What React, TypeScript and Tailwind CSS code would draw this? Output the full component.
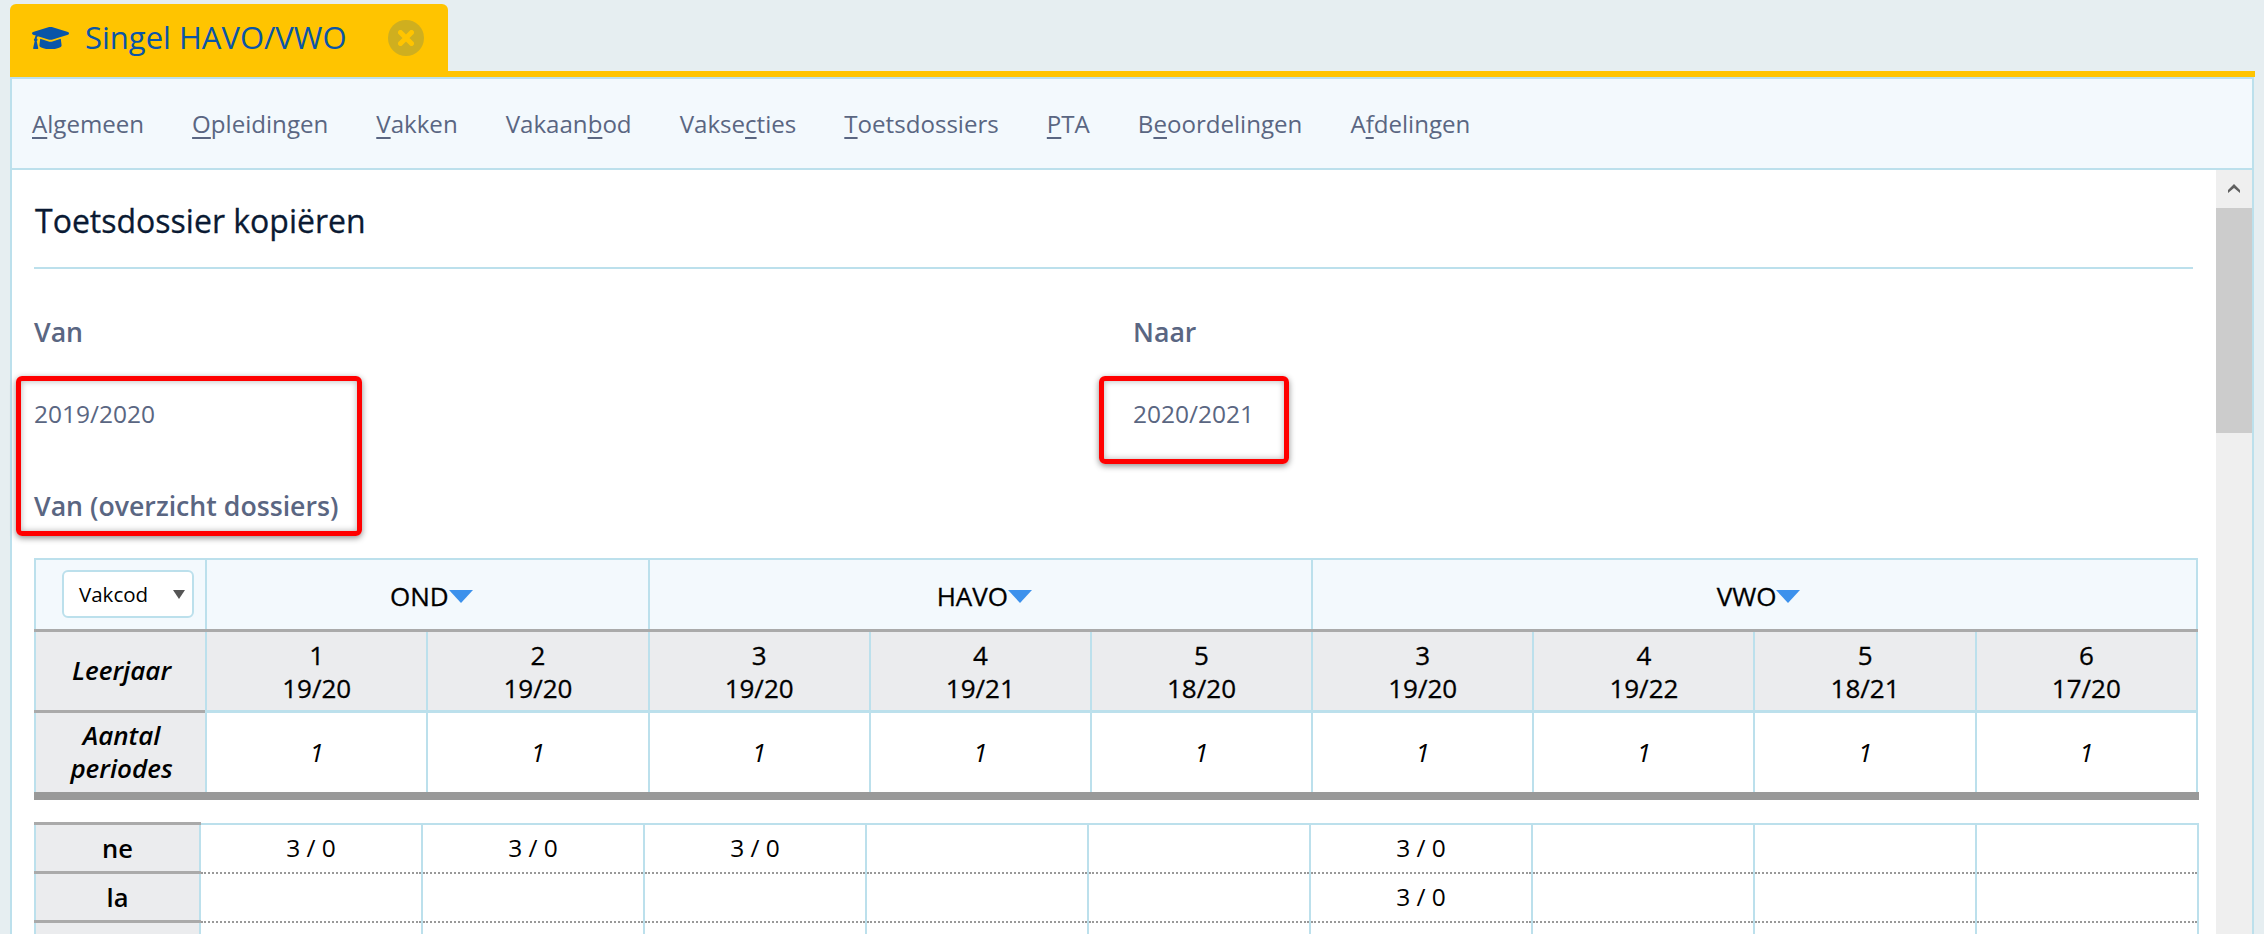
import { FaGraduationCap } from "react-icons/fa";

const NAV = [
  { pre: "", key: "A", post: "lgemeen" },
  { pre: "", key: "O", post: "pleidingen" },
  { pre: "", key: "V", post: "akken" },
  { pre: "Vakaan", key: "b", post: "od" },
  { pre: "Vakse", key: "c", post: "ties" },
  { pre: "", key: "T", post: "oetsdossiers" },
  { pre: "", key: "P", post: "TA" },
  { pre: "B", key: "e", post: "oordelingen" },
  { pre: "A", key: "f", post: "delingen" },
];

const YEARS = [
  ["1", "19/20"],
  ["2", "19/20"],
  ["3", "19/20"],
  ["4", "19/21"],
  ["5", "18/20"],
  ["3", "19/20"],
  ["4", "19/22"],
  ["5", "18/21"],
  ["6", "17/20"],
];

const ROWS = [
  { code: "ne", cells: ["3 / 0", "3 / 0", "3 / 0", "", "", "3 / 0", "", "", ""] },
  { code: "la", cells: ["", "", "", "", "", "3 / 0", "", "", ""] },
  { code: "", cells: ["", "", "", "", "", "", "", "", ""] },
];

function GroupHeader({ label, span }: { label: string; span: number }) {
  return (
    <th
      colSpan={span}
      className="border-2 border-b-0 border-[#bce0ec] bg-[#f3f9fd] pt-[4px] pl-[8px] text-center text-[26px] font-normal text-black [-webkit-text-stroke:0.3px]"
    >
      <span className="inline-flex items-center">
        {label}
        <span className="h-0 w-0 border-x-[12px] border-t-[13px] border-x-transparent border-t-[#3c91ec]" />
      </span>
    </th>
  );
}

export default function App() {
  return (
    <div className="h-[934px] overflow-hidden bg-[#e6eef1] font-['Open_Sans',sans-serif] text-black">
      {/* Tab strip */}
      <div className="flex h-[71px] items-end pl-[10px] pt-1">
        <div className="flex h-[67px] w-[438px] items-center rounded-t-[6px] bg-[#ffc400] pl-[22px]">
          <FaGraduationCap className="h-[36px] w-[37px] text-[#0a55a8]" />
          <span className="ml-[16px] text-[31px] whitespace-nowrap text-[#0a55a8]">Singel HAVO/VWO</span>
          <span className="ml-[41px] flex h-[36px] w-[36px] shrink-0 items-center justify-center rounded-full bg-[#cfaf1f]">
            <svg viewBox="0 0 16 16" className="h-[16px] w-[16px] stroke-[#ffc400]">
              <path d="M2.5 2.5 13.5 13.5M13.5 2.5 2.5 13.5" strokeWidth="5" strokeLinecap="round" />
            </svg>
          </span>
        </div>
      </div>

      <div className="mr-[9px] ml-[10px] h-[6px] bg-[#ffc400]" />

      <div className="mr-[10px] ml-[10px] flex h-[863px] flex-col border-x-2 border-[#bce0ec]">
        {/* Sub navigation */}
        <nav className="flex h-[93px] shrink-0 items-center gap-[48px] border-y-2 border-[#bce0ec] bg-[#f3f9fd] pt-[1px] pl-[20px] text-[24.1px] text-[#5a6682]">
          {NAV.map((item) => (
            <span key={item.pre + item.key + item.post}>
              {item.pre}
              <span className="underline underline-offset-[4px]">{item.key}</span>
              {item.post}
            </span>
          ))}
        </nav>

        <div className="flex min-h-0 flex-1 bg-white">
          <main className="relative min-w-0 flex-1 pl-[22px]">
            <h1 className="ml-[1px] pt-[30px] text-[32px] leading-[41px] text-[#0a1a33] [-webkit-text-stroke:0.3px]">Toetsdossier kopiëren</h1>
            <div className="mt-[26px] mr-[23px] h-[2px] bg-[#bce0ec]" />

            <div className="mt-[45px] grid grid-cols-[1099px_1fr] text-[#5a6682]">
              <div>
                <h2 className="text-[26.7px] leading-[36px] font-semibold">Van</h2>
                <p className="mt-[47px] text-[24.5px] leading-[33px]">2019/2020</p>
                <h2 className="mt-[58px] text-[26.7px] leading-[36px] font-semibold">Van (overzicht dossiers)</h2>
              </div>
              <div>
                <h2 className="text-[26.7px] leading-[36px] font-semibold">Naar</h2>
                <p className="mt-[47px] text-[24.5px] leading-[33px]">2020/2021</p>
              </div>
            </div>

            {/* Annotation boxes */}
            <div className="absolute top-[206px] left-[4px] h-[160px] w-[346px] rounded-[6px] border-[5px] border-[#ff0000] shadow-[0_2px_6px_rgba(0,0,0,0.45),inset_0_0_6px_rgba(0,0,0,0.3)]" />
            <div className="absolute top-[206px] left-[1087px] h-[88px] w-[190px] rounded-[6px] border-[5px] border-[#ff0000] shadow-[0_2px_6px_rgba(0,0,0,0.45),inset_0_0_6px_rgba(0,0,0,0.3)]" />

            <table className="mt-[34px] w-[2164px] table-fixed border-collapse">
              <colgroup>
                <col className="w-[171px]" />
                {YEARS.map((_, i) => (
                  <col key={i} className="w-[221px]" />
                ))}
              </colgroup>
              <thead>
                <tr className="h-[71px]">
                  <th className="border-2 border-b-0 border-[#bce0ec] bg-[#f3f9fd] text-center">
                    <span className="ml-[26px] flex h-[48px] w-[132px] items-center justify-between rounded-[6px] border-2 border-[#bce0ec] bg-white pr-[7px] pl-[15px] text-[20.5px] font-normal">
                      Vakcod
                      <span className="h-0 w-0 border-x-[6px] border-t-[9px] border-x-transparent border-t-[#555]" />
                    </span>
                  </th>
                  <GroupHeader label="OND" span={2} />
                  <GroupHeader label="HAVO" span={3} />
                  <GroupHeader label="VWO" span={4} />
                </tr>
                <tr className="h-[81px] border-t-[3px] border-t-[#aaaaaa]">
                  <th className="border-x-2 border-[#bce0ec] bg-[#ebecee] pl-[2px] text-[26px] font-semibold italic">Leerjaar</th>
                  {YEARS.map(([year, span], i) => (
                    <th key={i} className="border-x-2 border-b-[3px] border-[#bce0ec] bg-[#ebecee] pt-[2px] text-[26px] leading-[33px] font-normal [-webkit-text-stroke:0.3px]">
                      {year}
                      <br />
                      {span}
                    </th>
                  ))}
                </tr>
                <tr className="h-[81px] border-t-[3px] border-t-[#aaaaaa]">
                  <th className="border-x-2 border-[#bce0ec] bg-[#ebecee] pl-[2px] text-[26px] leading-[33px] font-semibold italic">
                    Aantal
                    <br />
                    periodes
                  </th>
                  {YEARS.map((_, i) => (
                    <td key={i} className="border-x-2 border-[#bce0ec] pt-[1px] text-center text-[26px] italic">
                      1
                    </td>
                  ))}
                </tr>
              </thead>
            </table>
            <div className="h-[8px] w-[2165px] bg-[#999999]" />

            <table className="mt-[22px] w-[2164px] table-fixed border-collapse">
              <colgroup>
                <col className="w-[165px]" />
                {YEARS.map((_, i) => (
                  <col key={i} className="w-[222px]" />
                ))}
              </colgroup>
              <tbody>
                {ROWS.map((row, r) => (
                  <tr key={r} className="h-[49px]">
                    <th className="border-x-2 border-t-[3px] border-x-[#bce0ec] border-t-[#aaaaaa] bg-[#ebecee] text-[25.5px] font-semibold">
                      {row.code}
                    </th>
                    {row.cells.map((cell, i) => (
                      <td
                        key={i}
                        className={`border-x-2 border-t-2 border-x-[#bce0ec] text-center text-[24.5px] ${r === 0 ? "border-t-[#bce0ec]" : "border-t-[#999999] [border-top-style:dotted]"}`}
                      >
                        {cell}
                      </td>
                    ))}
                  </tr>
                ))}
              </tbody>
            </table>
          </main>

          {/* Scrollbar */}
          <div className="flex w-[36px] shrink-0 flex-col bg-[#efefef]">
            <div className="flex h-[38px] items-center justify-center">
              <svg viewBox="0 0 12 10" className="h-[10px] w-[12px] fill-[#606060]">
                <path d="M6 0 12 6v3L6 4 0 9V6z" />
              </svg>
            </div>
            <div className="h-[225px] bg-[#cccccc]" />
          </div>
        </div>
      </div>
    </div>
  );
}
